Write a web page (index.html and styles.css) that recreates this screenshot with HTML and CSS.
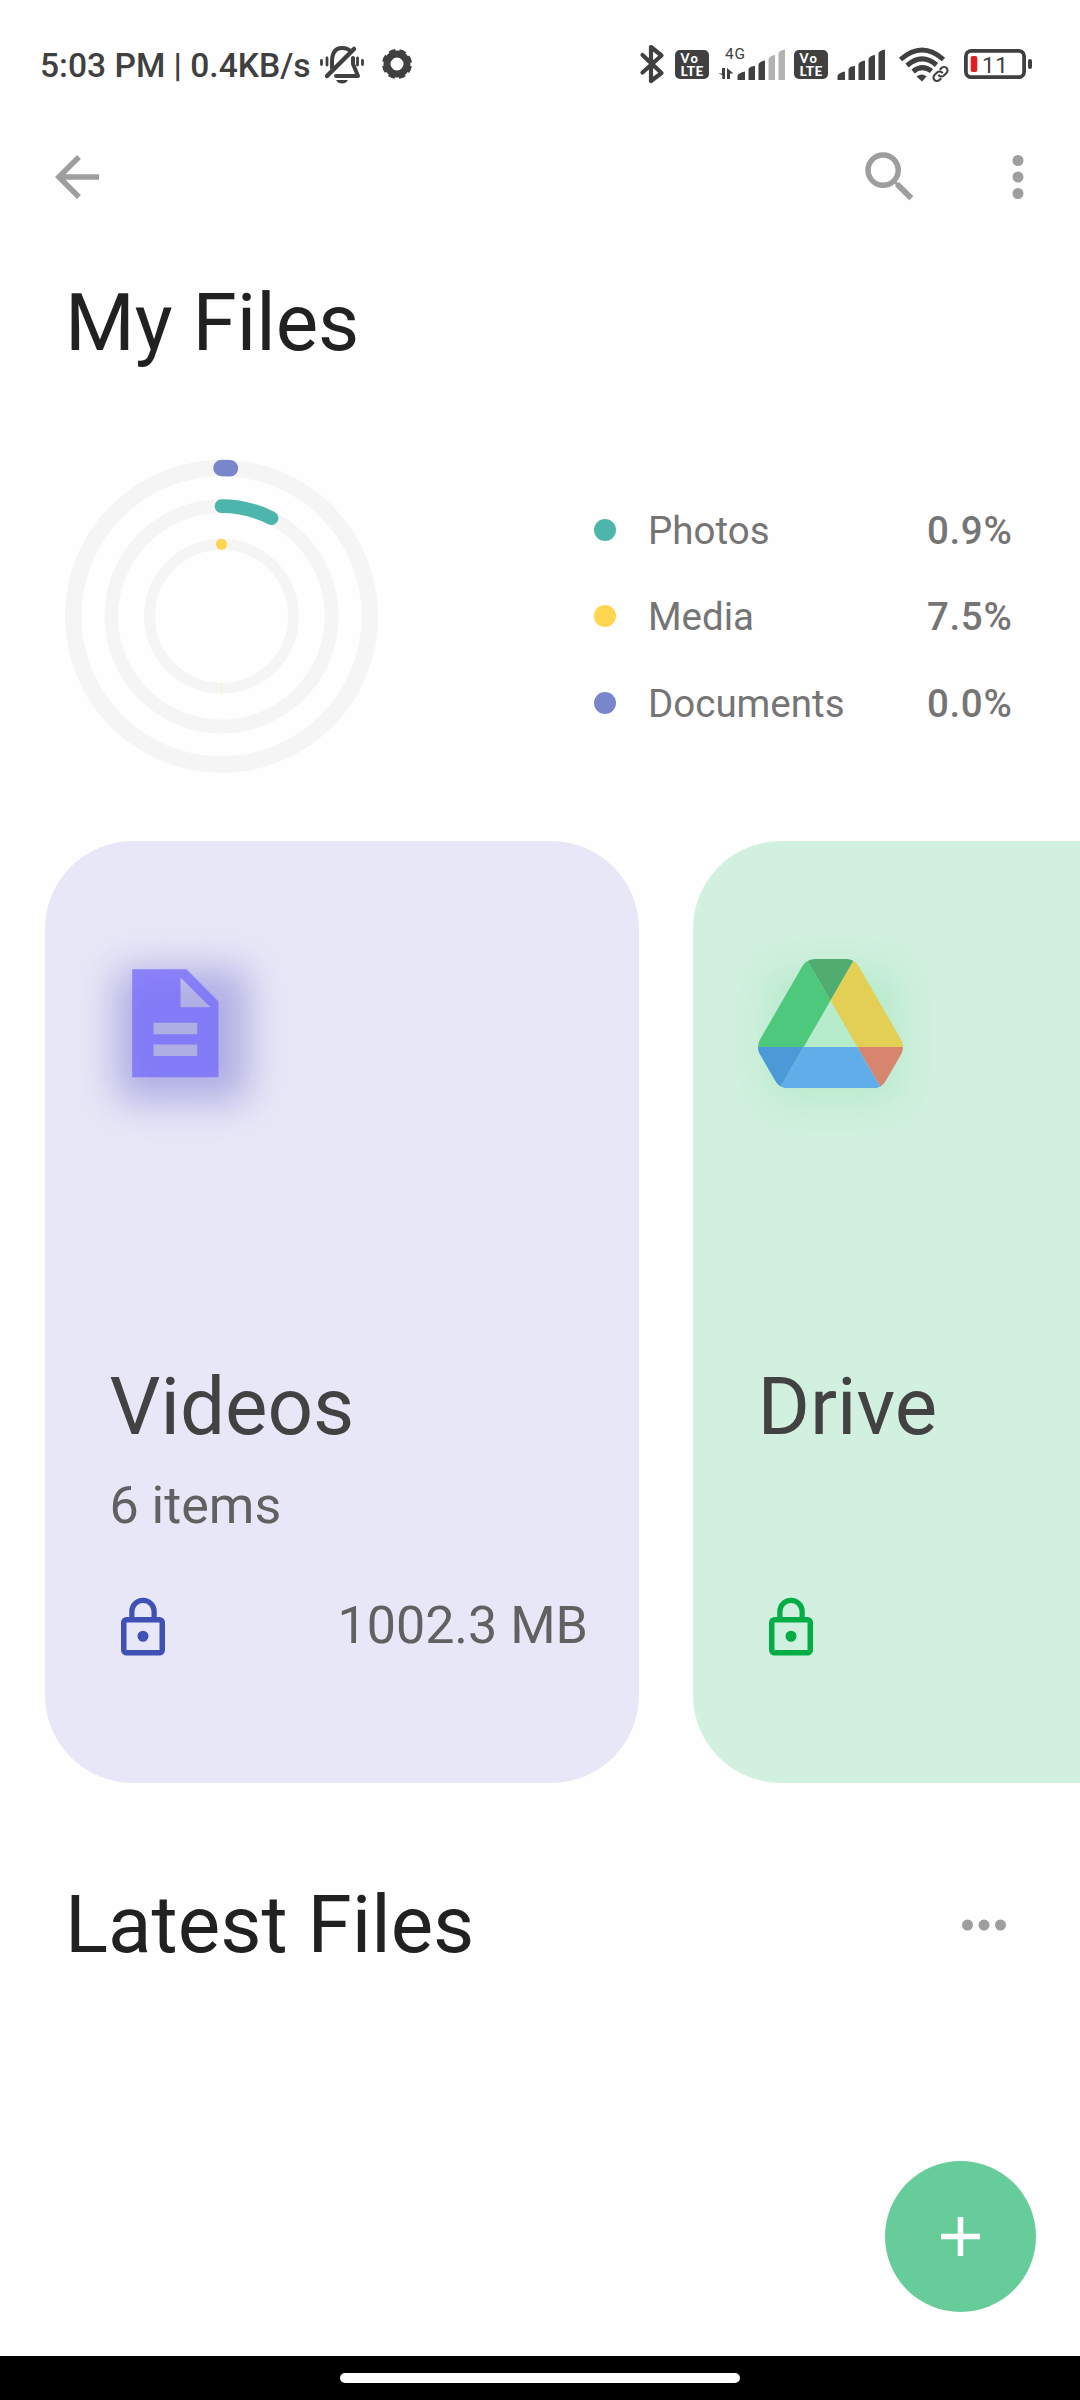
FILE: index.html
```html
<!DOCTYPE html>
<html lang="en">
<head>
<meta charset="utf-8">
<title>My Files</title>
<link rel="stylesheet" href="styles.css">
</head>
<body>
<div class="screen">
  <header class="status">
    <span class="status-text">5:03 PM | 0.4KB/s</span>
    <svg class="status-bell" width="56" height="50" viewBox="314 40 56 50">
      <g fill="none" stroke="#404040" stroke-width="4" stroke-linecap="round" stroke-linejoin="round">
        <path d="M332 68V62C332 52 336 48 342 48C346 48 349 49 351 52"/>
        <path d="M353 58V64L358 76H336"/>
        <path d="M354 49L327 76" stroke-width="4.5"/>
        <path d="M327 58V65M357.500 58V65" stroke-width="2.800"/>
        <path d="M321.500 60.500V64.500M362.500 60.500V64.500" stroke-width="2.800"/>
      </g>
      <path d="M336 80H348Q346 83.500 342 83.500T336 80Z" fill="#404040"/>
    </svg>
    <svg class="status-gear" width="32" height="50" viewBox="381 40 32 50">
      <circle cx="397" cy="64" r="10" fill="none" stroke="#404040" stroke-width="7"/>
      <circle cx="397" cy="64" r="13.200" fill="none" stroke="#404040" stroke-width="3.600" stroke-dasharray="6.370 4" stroke-dashoffset="-2"/>
    </svg>
    <div class="status-icons">
      <svg width="34" height="50" viewBox="636 40 34 50"><path d="M642.500 55L661.500 73L651 81V47L661.500 55.500L642.500 72.500" fill="none" stroke="#404040" stroke-width="4.200" stroke-linecap="round" stroke-linejoin="round"/></svg>
      <svg class="volte" width="44" height="50" viewBox="670 40 44 50"><rect x="675" y="50" width="34" height="29" rx="5"/><text x="680.500" y="63.200" font-size="12.800" textLength="17.500">Vo</text><text x="680.500" y="75.600" font-size="13.800" textLength="23">LTE</text></svg>
      <svg width="76" height="50" viewBox="714 40 76 50" fill="#404040">
        <text class="network" x="725" y="58.800" textLength="20">4G</text>
        <path d="M722.300 79V75L718 73.500H722V68H725V79ZM727 79V68L733.500 73.500H730V79Z"/>
        <path d="M737.500 80V76Q738 73 745 71.500V80ZM748.500 80V69Q750 66 755 66V80ZM758.500 80V64Q760 61 765 60.500V80Z"/>
        <path d="M768.500 80V59Q770 55.500 775 55V80ZM778.500 80V53Q780 50 785 49.500V80Z" fill="#b3b3b3"/>
      </svg>
      <svg class="volte" width="42" height="50" viewBox="671 40 42 50"><rect x="675" y="50" width="34" height="29" rx="5"/><text x="680.500" y="63.200" font-size="12.800" textLength="17.500">Vo</text><text x="680.500" y="75.600" font-size="13.800" textLength="23">LTE</text></svg>
      <svg width="58" height="50" viewBox="732 40 58 50" fill="#404040">
        <path d="M737.500 80V76Q738 73 745 71.500V80ZM748.500 80V69Q750 66 755 66V80ZM758.500 80V64Q760 61 765 60.500V80ZM768.500 80V59Q770 55.500 775 55V80ZM778.500 80V53Q780 50 785 49.500V80Z"/>
      </svg>
      <svg width="65" height="50" viewBox="890 40 65 50">
        <g fill="none" stroke="#404040" stroke-width="5">
          <path d="M900.500 59.500Q922 40.500 943.500 59.500M907 65.500Q922 52.500 936.500 65M913 71.500Q922 64 931.500 71"/>
        </g>
        <path d="M916.500 76.500Q922 72.500 926.500 76.500L922 81.500Z" fill="#404040"/>
        <g transform="rotate(-45 940.500 74)" fill="none" stroke="#404040" stroke-width="2.100">
          <path d="M938 77.500H935.500A3.500 3.500 0 0 1 935.500 70.500H939.500A3.500 3.500 0 0 1 942.500 75"/>
          <path d="M943 70.500H945.500A3.500 3.500 0 0 1 945.500 77.500H941.500A3.500 3.500 0 0 1 938.500 73"/>
        </g>
      </svg>
      <svg width="85" height="50" viewBox="955 40 85 50">
        <rect x="965.900" y="50.800" width="58.200" height="26.400" rx="5.500" fill="none" stroke="#404040" stroke-width="3.800"/>
        <rect x="1028" y="59" width="4" height="10" rx="2" fill="#404040"/>
        <rect x="970.700" y="56" width="6.600" height="16" rx="2" fill="#e02020"/>
        <text x="982" y="72.700" class="battery">11</text>
      </svg>
    </div>
  </header>

  <nav class="toolbar">
    <svg width="66" height="66" viewBox="0 0 24 24"><path d="M20 11H7.830l5.590-5.590L12 4l-8 8 8 8 1.410-1.410L7.830 13H20v-2z"/></svg>
    <svg class="search" width="66" height="66" viewBox="0 0 24 24"><path d="M15.500 14h-.79l-.28-.27A6.471 6.471 0 0 0 16 9.500 6.500 6.500 0 1 0 9.500 16c1.610 0 3.090-.59 4.230-1.570l.27.28v.79l5 4.990L20.490 19l-4.990-5zm-6 0C7.010 14 5 11.990 5 9.500S7.010 5 9.500 5 14 7.010 14 9.500 11.990 14 9.500 14z"/></svg>
    <svg width="66" height="66" viewBox="0 0 24 24"><circle cx="12" cy="6" r="2"/><circle cx="12" cy="12" r="2"/><circle cx="12" cy="18" r="2"/></svg>
  </nav>

  <h1 class="heading page-title">My Files</h1>

  <section class="usage">
    <svg class="rings" width="314" height="314" viewBox="-156.500 -157.300 314 314" fill="none" stroke-linecap="round">
      <g stroke="#f5f5f5">
        <circle r="148.300" stroke-width="16.500"/>
        <circle r="110.200" stroke-width="13.750"/>
        <circle r="72" stroke-width="11"/>
      </g>
      <path d="M0-148.300A148.300 148.300 0 0 1 8.400-148.060" stroke="#7986cb" stroke-width="16.500"/>
      <path d="M0-110.200A110.200 110.200 0 0 1 50-98.200" stroke="#4db6ac" stroke-width="13.750"/>
      <circle cy="-72" r="5.600" fill="#ffd54f"/>
      <path d="M0 66.500V77.500" stroke="#fbefc6" stroke-width="1" stroke-linecap="butt"/>
    </svg>
    <ul class="legend">
      <li><i class="dot teal"></i><span>Photos</span><b>0.9%</b></li>
      <li><i class="dot yellow"></i><span>Media</span><b>7.5%</b></li>
      <li><i class="dot indigo"></i><span>Documents</span><b>0.0%</b></li>
    </ul>
  </section>

  <section class="cards">
    <article class="card videos">
      <div class="glow">
        <svg width="87" height="109" viewBox="131.500 969.500 87 109"><path fill="#7064ff" fill-opacity=".7" fill-rule="evenodd" d="M131.700 969.700H186L218 1002V1077.800H131.700ZM180 978V1007.800H210ZM153 1023.300V1034.700H196.700V1023.300ZM153 1045V1056.500H196.700V1045Z"/></svg>
      </div>
      <h2>Videos</h2>
      <p>6 items</p>
      <footer>
        <svg width="66" height="66" viewBox="0 0 24 24"><path d="M12 17a2 2 0 1 0 0-4 2 2 0 0 0 0 4zm6-9h-1V6A5 5 0 0 0 7 6v2H6a2 2 0 0 0-2 2v10a2 2 0 0 0 2 2h12a2 2 0 0 0 2-2V10a2 2 0 0 0-2-2zM8.900 6a3.100 3.100 0 0 1 6.200 0v2H8.900zM18 20H6V10h12z"/></svg>
        <span>1002.3 MB</span>
      </footer>
    </article>
    <article class="card drive">
      <div class="glow">
        <svg width="145" height="129.500" viewBox="0 0 87.300 78">
          <path fill="#4b99d6" d="m6.600 66.850 3.850 6.650c.8 1.400 1.950 2.500 3.300 3.300l13.750-23.800h-27.500c0 1.550.4 3.100 1.200 4.500z"/>
          <path fill="#4dc87d" d="m43.650 25-13.750-23.800c-1.350.8-2.500 1.900-3.300 3.300l-25.400 44a9.060 9.060 0 0 0-1.200 4.500h27.500z"/>
          <path fill="#d88570" d="m73.550 76.800c1.350-.8 2.500-1.900 3.300-3.300l1.600-2.750 7.650-13.250c.8-1.400 1.200-2.950 1.200-4.500h-27.500z"/>
          <path fill="#50ad6f" d="m43.650 25 13.750-23.800c-1.350-.8-2.900-1.200-4.500-1.200h-18.500c-1.600 0-3.150.45-4.500 1.200z"/>
          <path fill="#60adea" d="m59.800 53h-32.300l-13.750 23.800c1.350.8 2.900 1.200 4.500 1.200h50.800c1.600 0 3.150-.45 4.500-1.200z"/>
          <path fill="#e3cf53" d="m73.400 26.500-12.700-22c-.8-1.400-1.950-2.500-3.300-3.300l-13.750 23.800 16.150 28h27.450c0-1.550-.4-3.100-1.200-4.500z"/>
        </svg>
      </div>
      <h2>Drive</h2>
      <p></p>
      <footer>
        <svg width="66" height="66" viewBox="0 0 24 24"><path d="M12 17a2 2 0 1 0 0-4 2 2 0 0 0 0 4zm6-9h-1V6A5 5 0 0 0 7 6v2H6a2 2 0 0 0-2 2v10a2 2 0 0 0 2 2h12a2 2 0 0 0 2-2V10a2 2 0 0 0-2-2zM8.900 6a3.100 3.100 0 0 1 6.200 0v2H8.900zM18 20H6V10h12z"/></svg>
      </footer>
    </article>
  </section>

  <section class="latest">
    <h1 class="heading">Latest Files</h1>
    <svg width="66" height="66" viewBox="0 0 24 24"><circle cx="6" cy="12" r="2"/><circle cx="12" cy="12" r="2"/><circle cx="18" cy="12" r="2"/></svg>
  </section>

  <button class="fab" aria-label="Add">
    <svg width="39" height="39" viewBox="0 0 39 39"><path d="M19.500 0V39M0 19.500H39" stroke="#fff" stroke-width="5.600"/></svg>
  </button>
  <div class="gesture-bar"><i></i></div>
</div>
</body>
</html>
```
FILE: styles.css
```css
* { box-sizing: border-box; margin: 0; padding: 0; }
body { background: #fefefe; font-family: Roboto, "Noto Sans", sans-serif; }
svg { display: block; flex: none; }

.screen { width: 1080px; height: 2400px; display: flex; flex-direction: column; overflow: hidden; }

.status { height: 144px; flex: none; display: flex; align-items: flex-start; padding: 40px 40px 0; }
.status-text { width: 274px; padding-top: 1px; line-height: 50px; font-size: 33.6px; font-weight: 500; color: #404040; white-space: nowrap; }
.status-gear { margin-left: 11px; }
.status-icons { margin-left: auto; display: flex; }
.volte rect { fill: #404040; }
.volte text { fill: #fff; font-family: Lato, Roboto, sans-serif; font-weight: 900; }
.network { font-size: 15.5px; }
.battery { font-size: 22.5px; fill: #404040; letter-spacing: .5px; }

.toolbar { height: 66px; flex: none; display: flex; padding: 0 29px 0 44px; fill: #9e9e9e; }
.search { margin-left: auto; margin-right: 62px; }

.heading { font-size: 80px; line-height: 94px; font-weight: 400; color: #212121; }
.page-title { margin: 66px 0 0 65px; }

.usage { height: 314px; margin-top: 89px; flex: none; display: flex; align-items: center; padding-left: 64.500px; }
.legend { list-style: none; margin-left: 215px; width: 419px; padding-top: 1px; }
.legend li { height: 86.400px; display: flex; align-items: center; font-size: 38.500px; color: #757575; }
.dot { width: 22px; height: 22px; border-radius: 50%; margin-right: 32.500px; }
.teal { background: #4db6ac; }
.yellow { background: #ffd54f; }
.indigo { background: #7986cb; }
.legend span, .legend b { padding-top: 1px; }
.legend b { margin-left: auto; font-weight: 500; letter-spacing: .7px; }

.cards { height: 942px; margin-top: 68px; flex: none; display: flex; gap: 54px; padding-left: 45px; }
.card { width: 594px; flex: none; border-radius: 88px; padding: 128px 51px 0 64.500px; }
.videos { background: #e8e7f7; fill: #3f51b5; }
.drive { background: #d2f0df; fill: #03ad45; }
.glow { position: relative; isolation: isolate; width: 132px; height: 132px; margin-left: 6px; padding-bottom: 23px; display: flex; align-items: center; justify-content: center; }
.glow::before { content: ""; position: absolute; z-index: -1; inset: 0; border-radius: 12px; filter: blur(19px); }
.videos .glow { padding-right: 13px; }
.drive .glow { margin-left: 10px; padding-right: 6px; }
.videos .glow::before { background: rgba(63, 63, 190, .34); }
.drive .glow::before { background: rgba(105, 220, 150, .26); }
.card h2 { margin-top: 259px; font-size: 80px; line-height: 94px; font-weight: 400; color: #424242; }
.card p { height: 60px; margin-top: 22px; font-size: 52px; line-height: 60px; color: #616161; }
.card footer { height: 66px; margin-top: 59px; display: flex; justify-content: space-between; font-size: 52px; line-height: 61px; color: #616161; }

.latest { margin-top: 95px; flex: none; display: flex; justify-content: space-between; align-items: center; padding: 0 63px 0 65px; fill: #9e9e9e; }

.fab { width: 151px; height: 151px; margin: auto 44px 44px auto; flex: none; border: 0; border-radius: 50%; background: #66cc99; display: flex; align-items: center; justify-content: center; }
.gesture-bar { height: 44px; flex: none; background: #000; display: flex; align-items: center; justify-content: center; }
.gesture-bar i { width: 400px; height: 10px; border-radius: 5px; background: #fff; }
```
